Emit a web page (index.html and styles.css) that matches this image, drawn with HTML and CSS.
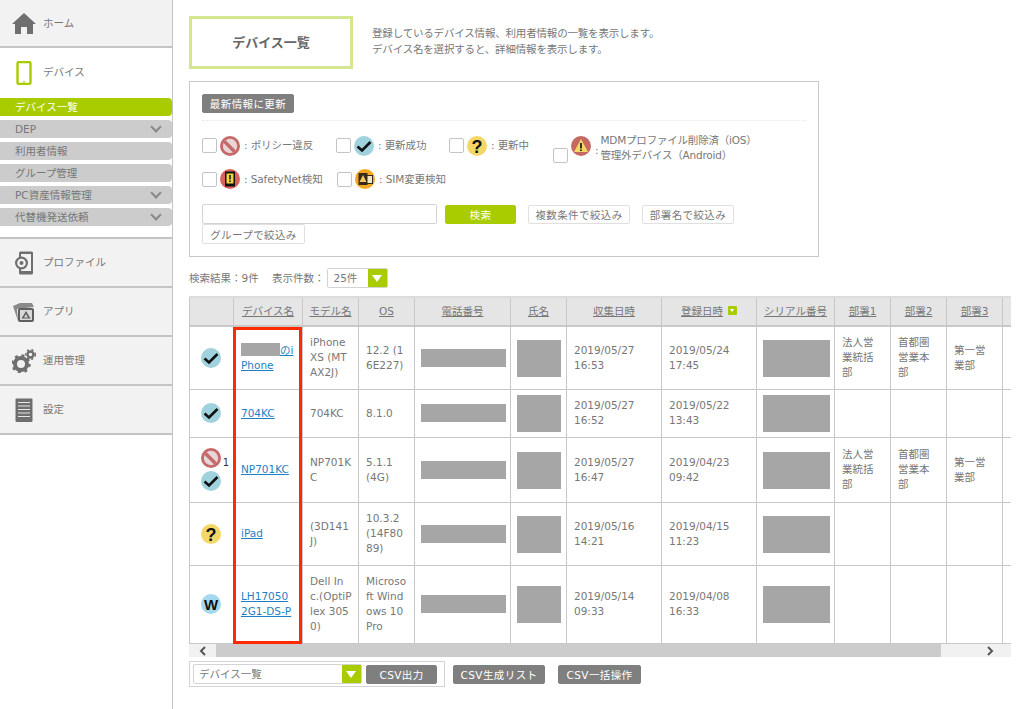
FILE: index.html
```html
<!DOCTYPE html>
<html lang="ja">
<head>
    <meta charset="utf-8">
    <title>デバイス一覧</title>
    <link rel="stylesheet" href="styles.css">
</head>
<body>
    <svg class="defs" width="0" height="0">
        <symbol id="st-ban" viewBox="0 0 20 20">
            <circle cx="10" cy="10" r="10" fill="#c56a6a"/>
            <circle cx="10" cy="10" r="7.2" fill="#e9d5d5"/>
            <path d="M4.5 5.5 L14.5 15.5" stroke="#c56a6a" stroke-width="3.4"/>
        </symbol>
        <symbol id="st-check" viewBox="0 0 20 20">
            <circle cx="10" cy="10" r="10" fill="#9fd2dd"/>
            <path d="M3.5 10.5 L8 14.5 L16.5 6" fill="none" stroke="#111" stroke-width="2.6"/>
        </symbol>
        <symbol id="st-warn" viewBox="0 0 20 20">
            <circle cx="10" cy="10" r="10" fill="#c56a62"/>
            <path d="M10 3 L17 16 L3 16 Z" fill="#f5d768"/>
            <path d="M10 7 V12.5 M10 13.5 V15" stroke="#222" stroke-width="1.8"/>
        </symbol>
        <symbol id="st-safety" viewBox="0 0 20 20">
            <circle cx="10" cy="10" r="10" fill="#d9625f"/>
            <rect x="5" y="2.5" width="10" height="15" fill="#111"/>
            <rect x="6.5" y="4.5" width="7" height="10" fill="#f3d23e"/>
            <path d="M10 6 V10.5 M10 11.5 V13" stroke="#111" stroke-width="1.5"/>
        </symbol>
        <symbol id="st-sim" viewBox="0 0 20 20">
            <circle cx="10" cy="10" r="10" fill="#f5a623"/>
            <rect x="3.5" y="4" width="9" height="12" fill="#332b1c"/>
            <path d="M8 6 L11.5 13 L4.5 13 Z" fill="#f5c75e"/>
            <rect x="12" y="6.5" width="5.5" height="8" fill="#f4e5c4" stroke="#332b1c"/>
        </symbol>
    </svg>

    <nav class="sidebar">
        <a class="nav-item nav-top">
            <svg class="nav-icon" viewBox="0 0 24 24"><path d="M12 2 L24 13 L21 13 L21 23 L15 23 L15 16 L9 16 L9 23 L3 23 L3 13 L0 13 Z" fill="#6f6f6f"/></svg>
            <span>ホーム</span>
        </a>
        <a class="nav-item nav-open">
            <svg class="nav-icon" viewBox="0 0 24 24"><rect x="5.5" y="1" width="13" height="22" rx="1.5" fill="#fff" stroke="#a9cc00" stroke-width="2.4"/><circle cx="12" cy="20.8" r="0.9" fill="#a9cc00"/></svg>
            <span>デバイス</span>
        </a>
        <ul class="subnav">
            <li class="active">デバイス一覧</li>
            <li>DEP<i class="chev"></i></li>
            <li>利用者情報</li>
            <li>グループ管理</li>
            <li>PC資産情報管理<i class="chev"></i></li>
            <li>代替機発送依頼<i class="chev"></i></li>
        </ul>
        <div class="nav-group">
            <a class="nav-item">
                <svg class="nav-icon" viewBox="0 0 24 24"><rect x="7" y="0.5" width="14" height="23" rx="1.5" fill="#6f6f6f"/><rect x="9" y="3" width="10" height="17" fill="#f2f2f2"/><circle cx="9.5" cy="12" r="6.5" fill="#6f6f6f"/><circle cx="9.5" cy="12" r="4.3" fill="#f2f2f2"/><circle cx="9.5" cy="12" r="2" fill="#6f6f6f"/></svg>
                <span>プロファイル</span>
            </a>
            <a class="nav-item">
                <svg class="nav-icon" viewBox="0 0 24 24"><path d="M1 6 L8 3 L20 3 L22 7 L5 9 L6 21 Z" fill="#8a8a8a"/><rect x="6" y="8" width="16" height="14" rx="2" fill="#5f5f5f"/><rect x="8" y="10" width="12" height="10" fill="#d8d8d8"/><path d="M14 11 L18.5 18.5 L9.5 18.5 Z" fill="#5f5f5f"/><path d="M14 14 L16 17.5 L12 17.5 Z" fill="#d8d8d8"/></svg>
                <span>アプリ</span>
            </a>
            <a class="nav-item">
                <svg class="nav-icon" viewBox="0 0 24 24"><circle cx="9" cy="15" r="6" fill="none" stroke="#6f6f6f" stroke-width="4"/><circle cx="9" cy="15" r="8.5" fill="none" stroke="#6f6f6f" stroke-width="2.4" stroke-dasharray="3 3.7"/><circle cx="18.5" cy="5.5" r="3" fill="none" stroke="#6f6f6f" stroke-width="2.4"/><circle cx="18.5" cy="5.5" r="4.8" fill="none" stroke="#6f6f6f" stroke-width="1.6" stroke-dasharray="2 2.6"/></svg>
                <span>運用管理</span>
            </a>
            <a class="nav-item">
                <svg class="nav-icon" viewBox="0 0 24 24"><rect x="3.5" y="0.5" width="17" height="23.5" rx="1" fill="#6f6f6f"/><path d="M6 4.5 H18 M6 8 H18 M6 11.5 H18 M6 15 H18 M6 18.5 H18" stroke="#e6e6e6" stroke-width="1.2"/></svg>
                <span>設定</span>
            </a>
        </div>
    </nav>

    <main class="content">
        <div class="title-row">
            <h1 class="page-title">デバイス一覧</h1>
            <p class="page-desc">登録しているデバイス情報、利用者情報の一覧を表示します。<br>デバイス名を選択すると、詳細情報を表示します。</p>
        </div>

        <section class="search-panel">
            <button class="btn btn-dark">最新情報に更新</button>
            <div class="filters">
                <label class="filter w-policy"><i class="check"></i><svg class="status"><use href="#st-ban"/></svg>: ポリシー違反</label>
                <label class="filter w-success"><i class="check"></i><svg class="status"><use href="#st-check"/></svg>: 更新成功</label>
                <label class="filter w-update"><i class="check"></i><svg class="status" viewBox="0 0 20 20"><circle cx="10" cy="10" r="10" fill="#f5d768"/><text x="10" y="16.5" class="st-char">?</text></svg>: 更新中</label>
                <label class="filter w-mdm"><i class="check check-low"></i><svg class="status"><use href="#st-warn"/></svg><span class="colon">:</span><span class="two-line">MDMプロファイル削除済（iOS）<br>管理外デバイス（Android）</span></label>
            </div>
            <div class="filters filters-second">
                <label class="filter w-safety"><i class="check"></i><svg class="status"><use href="#st-safety"/></svg>: SafetyNet検知</label>
                <label class="filter"><i class="check"></i><svg class="status"><use href="#st-sim"/></svg>: SIM変更検知</label>
            </div>
            <div class="search-row">
                <input class="search-input" type="text">
                <button class="btn btn-green">検索</button>
                <button class="btn btn-light btn-multi">複数条件で絞込み</button>
                <button class="btn btn-light btn-dept">部署名で絞込み</button>
                <button class="btn btn-light btn-group">グループで絞込み</button>
            </div>
        </section>

        <div class="result-row">
            <span class="result-count">検索結果：9件</span>
            <span>表示件数：</span>
            <div class="select select-count"><span>25件</span><i class="select-arrow"></i></div>
        </div>

        <div class="table-wrap">
            <table class="device-table">
                <colgroup>
                    <col class="c-44"><col class="c-69"><col class="c-56"><col class="c-56"><col class="c-96"><col class="c-56"><col class="c-95"><col class="c-95"><col class="c-78"><col class="c-56"><col class="c-56"><col class="c-56"><col class="c-60">
                </colgroup>
                <thead>
                    <tr>
                        <th></th><th><u>デバイス名</u></th><th><u>モデル名</u></th><th><u>OS</u></th><th><u>電話番号</u></th><th><u>氏名</u></th><th><u>収集日時</u></th><th><u>登録日時</u><i class="sort"></i></th><th><u>シリアル番号</u></th><th><u>部署1</u></th><th><u>部署2</u></th><th><u>部署3</u></th><th></th>
                    </tr>
                </thead>
                <tbody>
                    <tr>
                        <td class="icon-cell"><svg class="status"><use href="#st-check"/></svg></td>
                        <td><i class="mask-inline"></i><a>のi<br>Phone</a></td>
                        <td>iPhone<br>XS (MT<br>AX2J)</td>
                        <td>12.2 (1<br>6E227)</td>
                        <td><div class="mask mask-phone"></div></td>
                        <td><div class="mask mask-name"></div></td>
                        <td>2019/05/27<br>16:53</td>
                        <td>2019/05/24<br>17:45</td>
                        <td><div class="mask mask-serial"></div></td>
                        <td>法人営<br>業統括<br>部</td>
                        <td>首都圏<br>営業本<br>部</td>
                        <td>第一営<br>業部</td>
                        <td></td>
                    </tr>
                    <tr>
                        <td class="icon-cell"><svg class="status"><use href="#st-check"/></svg></td>
                        <td><a>704KC</a></td>
                        <td>704KC</td>
                        <td>8.1.0</td>
                        <td><div class="mask mask-phone"></div></td>
                        <td><div class="mask mask-name"></div></td>
                        <td>2019/05/27<br>16:52</td>
                        <td>2019/05/22<br>13:43</td>
                        <td><div class="mask mask-serial"></div></td>
                        <td></td><td></td><td></td><td></td>
                    </tr>
                    <tr>
                        <td class="icon-cell">
                            <div class="icon-stack"><svg class="status"><use href="#st-ban"/></svg><span class="badge-count">1</span><svg class="status"><use href="#st-check"/></svg></div>
                        </td>
                        <td><a>NP701KC</a></td>
                        <td>NP701K<br>C</td>
                        <td>5.1.1<br>(4G)</td>
                        <td><div class="mask mask-phone"></div></td>
                        <td><div class="mask mask-name"></div></td>
                        <td>2019/05/27<br>16:47</td>
                        <td>2019/04/23<br>09:42</td>
                        <td><div class="mask mask-serial"></div></td>
                        <td>法人営<br>業統括<br>部</td>
                        <td>首都圏<br>営業本<br>部</td>
                        <td>第一営<br>業部</td>
                        <td></td>
                    </tr>
                    <tr>
                        <td class="icon-cell"><svg class="status" viewBox="0 0 20 20"><circle cx="10" cy="10" r="10" fill="#f5d768"/><text x="10" y="16.5" class="st-char">?</text></svg></td>
                        <td><a>iPad</a></td>
                        <td>(3D141<br>J)</td>
                        <td>10.3.2<br>(14F80<br>89)</td>
                        <td><div class="mask mask-phone"></div></td>
                        <td><div class="mask mask-name"></div></td>
                        <td>2019/05/16<br>14:21</td>
                        <td>2019/04/15<br>11:23</td>
                        <td><div class="mask mask-serial"></div></td>
                        <td></td><td></td><td></td><td></td>
                    </tr>
                    <tr>
                        <td class="icon-cell"><svg class="status" viewBox="0 0 20 20"><circle cx="10" cy="10" r="10" fill="#a5d8ef"/><text x="10" y="15.5" class="st-char st-w">W</text></svg></td>
                        <td><a>LH17050<br>2G1-DS-P</a></td>
                        <td>Dell In<br>c.(OptiP<br>lex 305<br>0)</td>
                        <td>Microso<br>ft Wind<br>ows 10<br>Pro</td>
                        <td><div class="mask mask-phone"></div></td>
                        <td><div class="mask mask-name"></div></td>
                        <td>2019/05/14<br>09:33</td>
                        <td>2019/04/08<br>16:33</td>
                        <td><div class="mask mask-serial"></div></td>
                        <td></td><td></td><td></td><td></td>
                    </tr>
                </tbody>
            </table>
            <div class="hscroll">
                <span class="scroll-arrow">
                    <svg width="8" height="10" viewBox="0 0 8 10"><path d="M6 1 L2 5 L6 9" fill="none" stroke="#555" stroke-width="2"/></svg>
                </span>
                <div class="scroll-thumb"></div>
                <span class="scroll-arrow">
                    <svg width="8" height="10" viewBox="0 0 8 10"><path d="M2 1 L6 5 L2 9" fill="none" stroke="#555" stroke-width="2"/></svg>
                </span>
            </div>
            <div class="highlight"></div>
        </div>

        <div class="bottom-row">
            <div class="export-box">
                <div class="select select-export"><span>デバイス一覧</span><i class="select-arrow"></i></div>
                <button class="btn btn-dark btn-csv">CSV出力</button>
            </div>
            <button class="btn btn-dark btn-list">CSV生成リスト</button>
            <button class="btn btn-dark btn-bulk">CSV一括操作</button>
        </div>
    </main>
</body>
</html>
```

FILE: styles.css
```css
* {
    box-sizing: border-box;
}
body {
    margin: 0;
    height: 100vh;
    overflow: hidden;
    display: flex;
    font-family: 'DejaVu Sans', 'Noto Sans CJK JP', sans-serif;
    font-size: 10.5px;
    line-height: 15px;
    color: #777;
    background: #fff;
}
.defs {
    position: absolute;
}
.st-char {
    font-family: 'Liberation Sans', sans-serif;
    font-size: 18px;
    font-weight: 700;
    text-anchor: middle;
    fill: #111;
}
.st-w {
    font-size: 15px;
}

/* sidebar */
.sidebar {
    width: 173px;
    flex: none;
    border-right: 1px solid #c4c4c4;
}
.nav-item {
    height: 49px;
    display: flex;
    align-items: center;
    gap: 7px;
    padding-left: 12px;
    background: #f2f2f2;
    border-bottom: 2px solid #c4c4c4;
    color: #777;
}
.nav-top {
    height: 48px;
}
.nav-open {
    background: #fff;
    border-bottom: none;
}
.nav-icon {
    width: 24px;
    height: 24px;
}
.subnav {
    list-style: none;
    margin: 1px 0 0;
    padding: 0;
}
.subnav li {
    height: 18px;
    margin-bottom: 4px;
    padding-left: 15px;
    line-height: 18px;
    background: #ccc;
    border-radius: 0 4px 4px 0;
    display: flex;
    justify-content: space-between;
    align-items: center;
}
.subnav li.active {
    background: #a9cc00;
    color: #fff;
}
.chev {
    width: 8px;
    height: 8px;
    margin: -4px 12px 0 0;
    border-right: 2px solid #888;
    border-bottom: 2px solid #888;
    transform: rotate(45deg);
}
.nav-group {
    margin-top: 11px;
    border-top: 2px solid #c4c4c4;
}

/* main */
.content {
    width: 822px;
    margin-left: 16px;
    padding-top: 16px;
    flex: none;
}
.title-row {
    display: flex;
    align-items: flex-start;
}
.page-title {
    width: 164px;
    height: 53px;
    margin: 0;
    border: 3px solid #d4e68f;
    font-size: 13px;
    font-weight: 700;
    line-height: 47px;
    text-align: center;
    color: #666;
}
.page-desc {
    margin: 9px 0 0 19px;
    line-height: 16px;
    letter-spacing: -0.18px;
}
.search-panel {
    width: 630px;
    height: 176px;
    margin-top: 12px;
    padding: 12px 12px 0;
    border: 1px solid #c8c8c8;
}
.btn {
    height: 19px;
    padding: 0;
    border: 1px solid #e0e0e0;
    border-radius: 2px;
    font-family: inherit;
    font-size: 10.5px;
    letter-spacing: 0.4px;
}
.btn-dark {
    background: #7f7f7f;
    border-color: #7f7f7f;
    color: #fff;
}
.search-panel > .btn-dark {
    display: block;
    width: 92px;
    padding-bottom: 1px;
}
.btn-green {
    width: 71px;
    background: #a9cc00;
    border-color: #a9cc00;
    color: #fff;
}
.btn-light {
    background: #fff;
    color: #777;
}
.btn-multi {
    width: 102px;
    margin-left: 12px;
}
.btn-dept {
    width: 92px;
    margin-left: 12px;
}
.btn-group {
    width: 103px;
}
.filters {
    display: flex;
    align-items: center;
    height: 42px;
    margin-top: 7px;
    padding-top: 8px;
    border-top: 1px dotted #e6e6e6;
}
.filters-second {
    height: 22px;
    margin-top: 6px;
    padding-top: 0;
    border-top: none;
}
.filter {
    display: flex;
    align-items: center;
    white-space: nowrap;
    letter-spacing: -0.1px;
}
.w-policy {
    width: 134px;
}
.w-success {
    width: 113px;
}
.w-update {
    width: 104px;
}
.w-safety {
    width: 135px;
}
.check {
    width: 15px;
    height: 15px;
    margin-right: 3px;
    background: #fff;
    border: 1px solid #c4c4c4;
    border-radius: 2px;
}
.check-low {
    margin-top: 20px;
}
.status {
    width: 20px;
    height: 20px;
    margin-right: 4px;
    flex: none;
}
.colon {
    margin-top: 10px;
    margin-right: 2px;
}
.two-line {
    margin-top: 4px;
    letter-spacing: -0.2px;
}
.search-row {
    display: flex;
    flex-wrap: wrap;
    align-items: flex-start;
    margin-top: 14px;
}
.search-input {
    width: 235px;
    height: 20px;
    margin-right: 8px;
    border: 1px solid #d4d4d4;
    border-radius: 2px;
}
.search-row .btn {
    margin-top: 1px;
}
.search-row .btn-group {
    margin-top: 0;
    height: 20px;
}
.result-row {
    display: flex;
    align-items: center;
    height: 20px;
    margin-top: 11px;
}
.result-count {
    width: 83px;
}
.select {
    display: flex;
    align-items: center;
    justify-content: space-between;
    height: 20px;
    padding-left: 5px;
    background: #fff;
    border: 1px solid #d4d4d4;
    border-radius: 2px;
}
.select-count {
    width: 61px;
    margin-left: 2px;
    padding-left: 6px;
}
.select-arrow {
    position: relative;
    width: 19px;
    height: 18px;
    background: #a9cc00;
}
.select-arrow::after {
    content: "";
    position: absolute;
    left: 4px;
    top: 6px;
    border-left: 5.5px solid transparent;
    border-right: 5.5px solid transparent;
    border-top: 7px solid #fff;
}

/* table */
.table-wrap {
    position: relative;
    width: 822px;
    margin-top: 8px;
    overflow: hidden;
}
.device-table {
    table-layout: fixed;
    width: 873px;
    border-collapse: collapse;
}
.c-44 { width: 44px; }
.c-56 { width: 56px; }
.c-60 { width: 60px; }
.c-69 { width: 69px; }
.c-78 { width: 78px; }
.c-95 { width: 95px; }
.c-96 { width: 96px; }
.device-table th,
.device-table td {
    border: 1px solid #c8c8c8;
    padding: 8px 8px 9px 7px;
    vertical-align: middle;
    text-align: left;
    font-weight: 400;
    white-space: nowrap;
    overflow: hidden;
}
.device-table th {
    height: 29px;
    padding: 0;
    background: #e5e5e5;
    text-align: center;
    border-top: 2px solid #dcdcdc;
    border-bottom-width: 2px;
}
.device-table a {
    color: #1f7fc4;
    text-decoration: underline;
}
.device-table .icon-cell {
    padding-left: 6px;
    text-align: center;
}
.icon-cell .status {
    display: block;
    margin: 0 auto;
}
.icon-stack {
    position: relative;
    padding: 2px 0;
}
.icon-stack .status + .badge-count + .status {
    margin-top: 3px;
}
.badge-count {
    position: absolute;
    right: -4px;
    top: 9px;
    font-size: 10px;
    color: #333;
}
.sort {
    display: inline-block;
    position: relative;
    width: 9px;
    height: 9px;
    margin-left: 5px;
    background: #a9cc00;
    border-radius: 1px;
}
.sort::after {
    content: "";
    position: absolute;
    left: 2px;
    top: 3px;
    border-left: 2.5px solid transparent;
    border-right: 2.5px solid transparent;
    border-top: 3px solid #fff;
}
.mask {
    background: #a6a6a6;
}
.mask-phone {
    width: 85px;
    height: 18px;
    margin: 0 -1px;
}
.mask-name {
    width: 44px;
    height: 37px;
    margin: -4px 0 -5px -1px;
}
.mask-serial {
    width: 67px;
    height: 37px;
    margin: -4px 0 -5px -1px;
}
.mask-inline {
    display: inline-block;
    width: 39px;
    height: 13px;
    vertical-align: -2px;
    background: #a6a6a6;
}
.hscroll {
    display: flex;
    align-items: center;
    height: 13px;
    background: #f1f1f1;
}
.scroll-arrow {
    display: flex;
    align-items: center;
    justify-content: center;
    width: 27px;
}
.scroll-arrow + .scroll-thumb {
    width: 725px;
    height: 13px;
    background: #ccc;
}
.scroll-thumb + .scroll-arrow {
    margin-left: 35px;
}
.highlight {
    position: absolute;
    left: 44px;
    top: 31px;
    width: 69px;
    height: 317px;
    border: 3px solid #ff2a00;
}

/* bottom buttons */
.bottom-row {
    display: flex;
    align-items: center;
    margin-top: 4px;
}
.export-box {
    display: flex;
    align-items: center;
    width: 256px;
    height: 26px;
    padding-left: 3px;
    border: 1px solid #d4d4d4;
}
.select-export {
    width: 169px;
}
.btn-csv {
    width: 71px;
    margin-left: 4px;
}
.btn-list {
    width: 92px;
    margin-left: 8px;
}
.btn-bulk {
    width: 83px;
    margin-left: 13px;
}
```
